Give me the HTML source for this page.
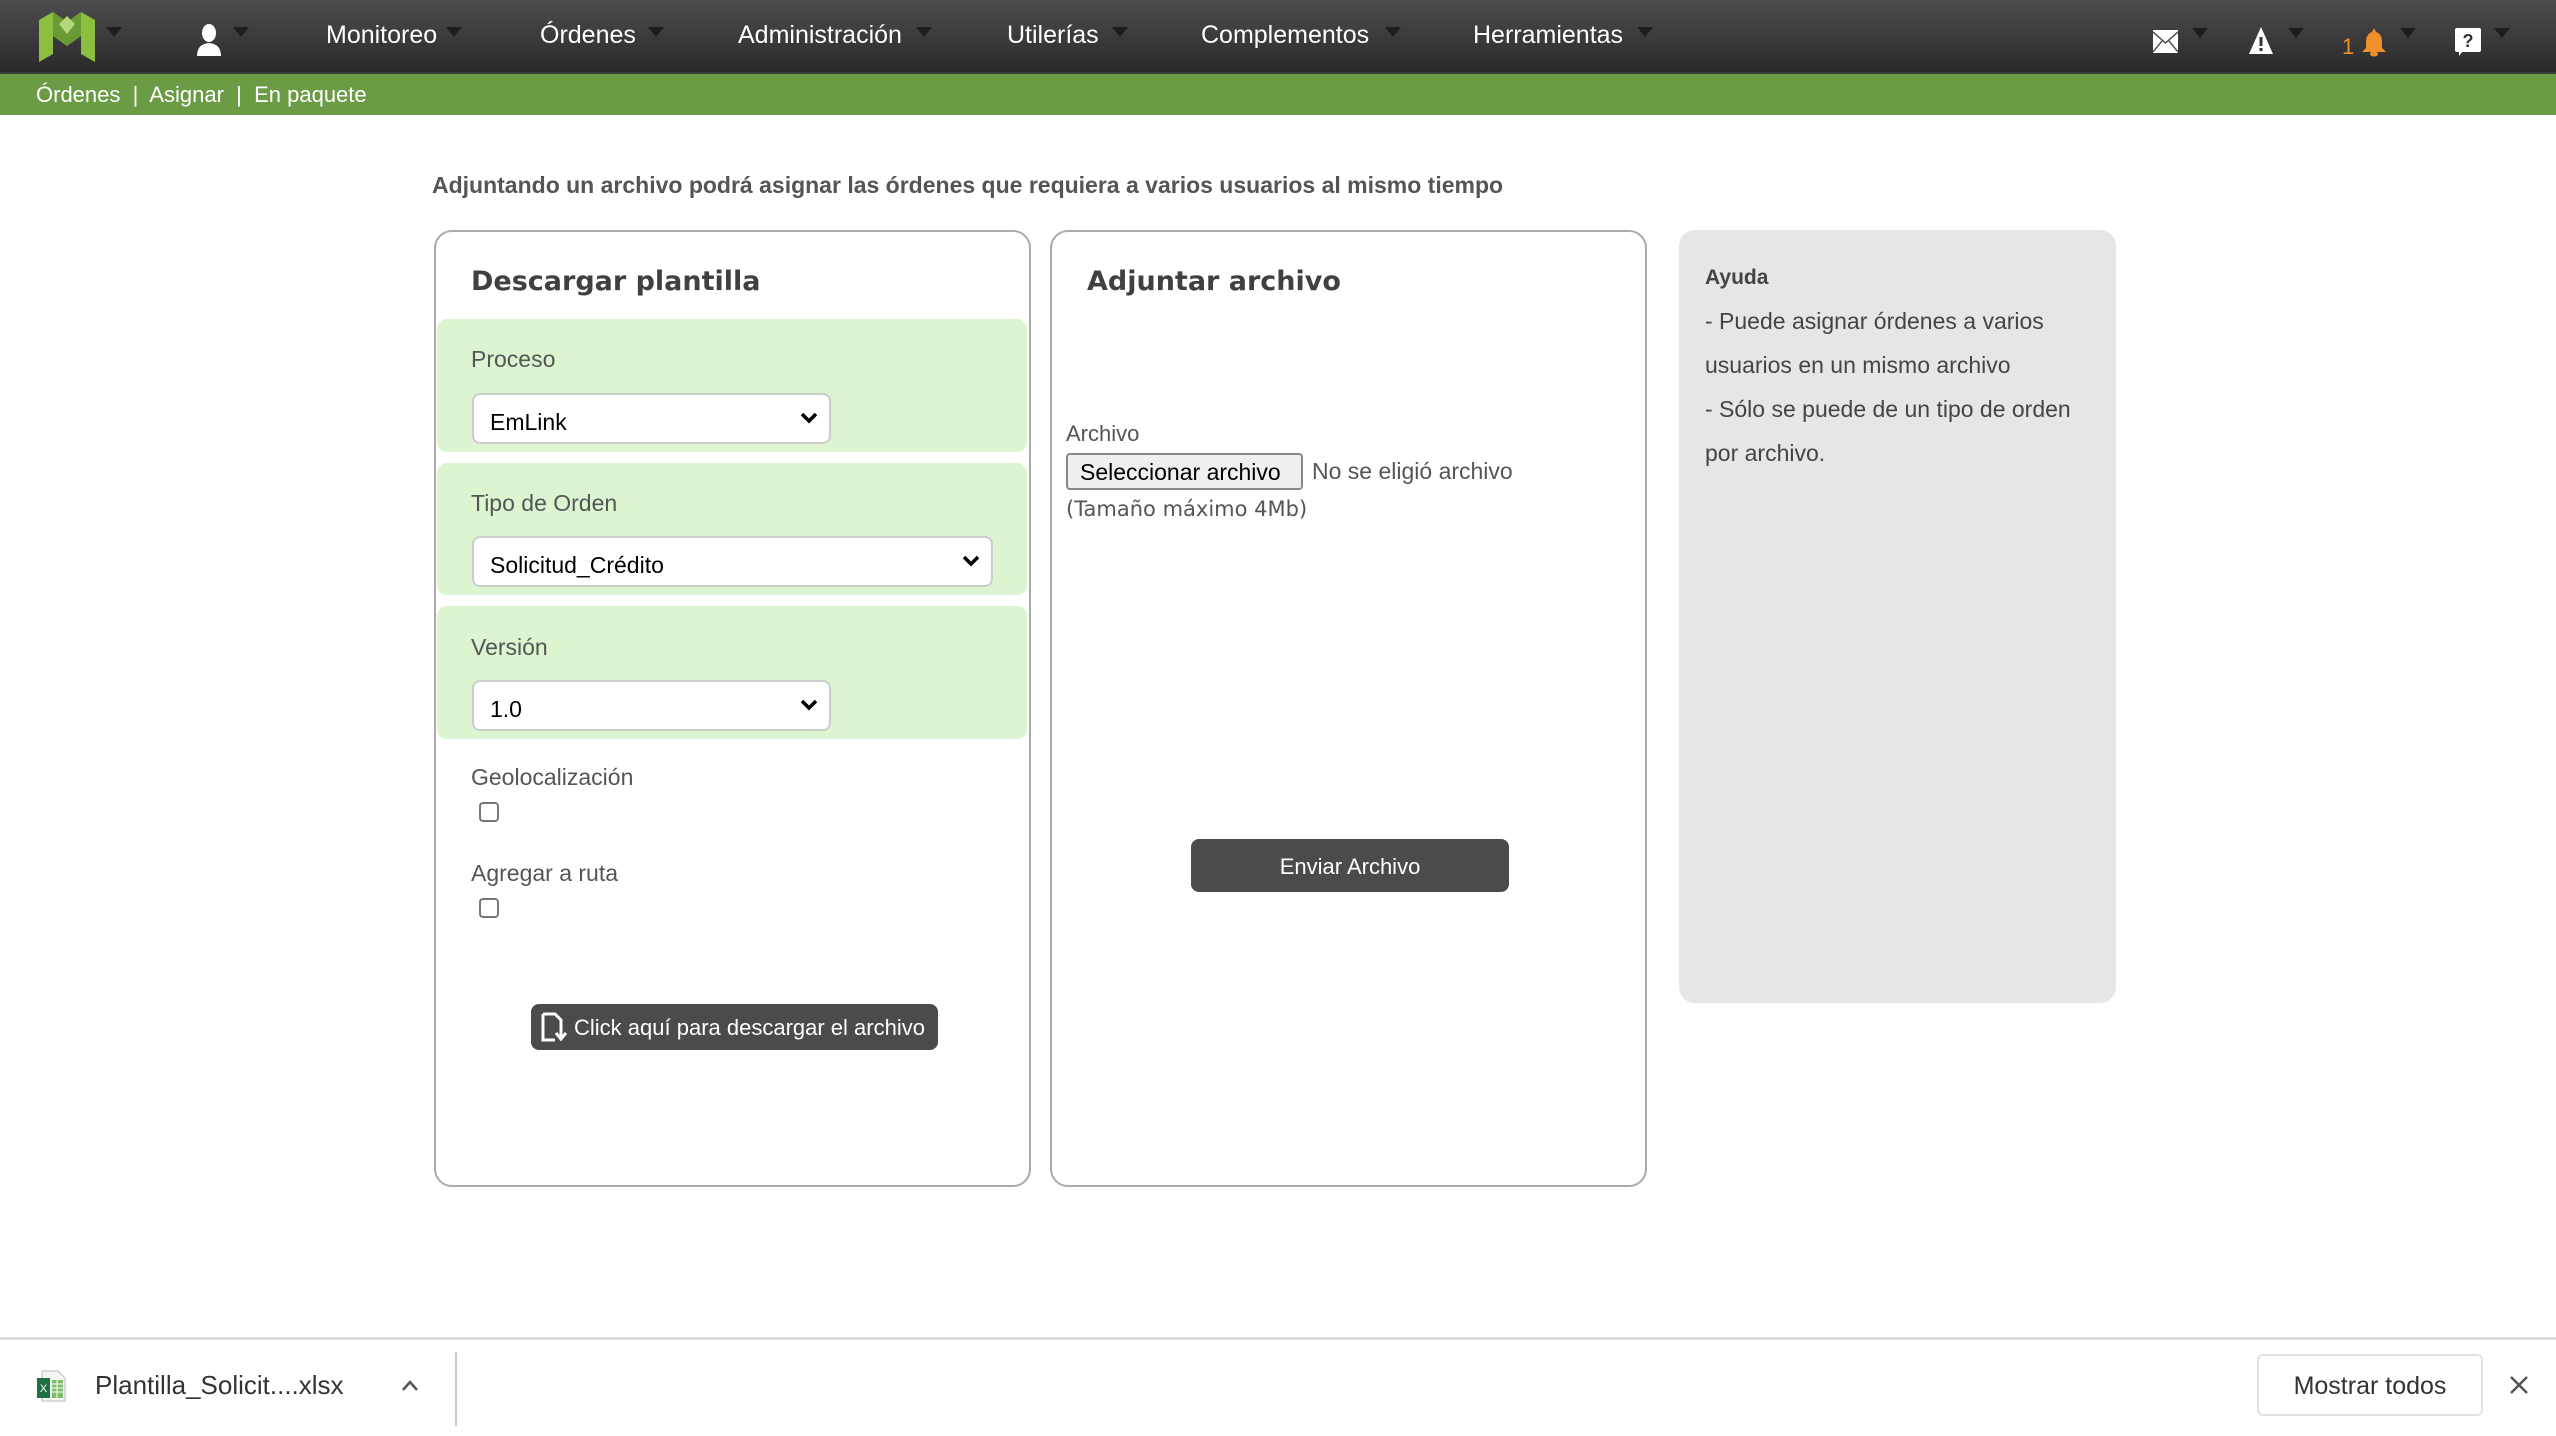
<!DOCTYPE html>
<html><head><meta charset="utf-8"><style>
*{box-sizing:border-box;margin:0;padding:0}
body{width:2556px;height:1436px;position:relative;background:#fff;font-family:"Liberation Sans",Arial,sans-serif;overflow:hidden}
.a{position:absolute;white-space:nowrap}
.nav{position:absolute;left:0;top:0;width:2556px;height:72px;background:linear-gradient(#4d4d4d,#2a2a2a)}
.ni{position:absolute;top:21px;color:#fff;font-size:25px}
.tri{position:absolute;width:0;height:0;border-left:8px solid transparent;border-right:8px solid transparent;border-top:10px solid #1e1e1e}
.crumb{position:absolute;left:0;top:72px;width:2556px;height:43px;background:#6c9b45;border-top:2px solid #3a3a3a}
.panel{position:absolute;top:230px;height:957px;border:2px solid #aaa;border-radius:18px;background:#fff}
.title{position:absolute;font-family:"DejaVu Sans",sans-serif;font-weight:bold;font-size:27px;color:#404040}
.sec{position:absolute;left:437px;width:590px;background:#dcf5d0;border-radius:10px}
.lbl{position:absolute;font-size:23px;color:#555}
.sel{position:absolute;height:51px;background:#fff;border:2px solid #ccc;border-radius:8px;font-size:23px;color:#000;padding:14px 0 0 16px}
.sel svg{position:absolute;right:10px;top:16px}
.cb{position:absolute;width:20px;height:20px;border:2px solid #777;border-radius:4px;background:#fff}
.btn{position:absolute;background:#4b4b4b;color:#fff;border-radius:8px;font-size:22px;text-align:center}
.help{position:absolute;left:1679px;top:230px;width:437px;height:773px;background:#e6e6e8;border-radius:16px}
.hl{position:absolute;left:1705px;font-size:23px;color:#444}
</style></head><body>
<div class="nav">
 <svg class="a" style="left:39px;top:12px" width="56" height="50" viewBox="0 0 56 50">
  <polygon points="0,8 14,0 28,10 42,0 56,8 56,50 42,42 42,24 28,34 14,24 14,42 0,50" fill="#8cbf3f"/>
  <polygon points="14,0 28,10 42,0 42,24 28,34 14,24" fill="#6a9a35"/>
  <polygon points="20,12 28,22 36,12 28,4" fill="#b5d77a"/>
 </svg>
 <div class="tri" style="left:106px;top:27px"></div>
 <svg class="a" style="left:195px;top:24px" width="28" height="32" viewBox="0 0 28 32"><ellipse cx="14" cy="9" rx="7" ry="9" fill="#fff"/><path d="M2 32 Q2 20 14 19 Q26 20 26 32Z" fill="#fff"/></svg>
 <div class="tri" style="left:233px;top:27px"></div>
 <div class="ni" style="left:326px">Monitoreo</div><div class="tri" style="left:446px;top:27px"></div>
 <div class="ni" style="left:540px">Órdenes</div><div class="tri" style="left:648px;top:27px"></div>
 <div class="ni" style="left:738px">Administración</div><div class="tri" style="left:916px;top:27px"></div>
 <div class="ni" style="left:1007px">Utilerías</div><div class="tri" style="left:1112px;top:27px"></div>
 <div class="ni" style="left:1201px">Complementos</div><div class="tri" style="left:1385px;top:27px"></div>
 <div class="ni" style="left:1473px">Herramientas</div><div class="tri" style="left:1637px;top:27px"></div>
 <svg class="a" style="left:2152px;top:29px" width="27" height="25" viewBox="0 0 27 25"><rect x="1" y="1" width="25" height="23" fill="#fff"/><path d="M1 3 L13.5 14 L26 3 M1 23 L10 12 M26 23 L17 12" stroke="#555" stroke-width="1.5" fill="none"/></svg>
 <div class="tri" style="left:2192px;top:28px"></div>
 <svg class="a" style="left:2249px;top:27px" width="24" height="27" viewBox="0 0 24 27"><polygon points="12,0 24,27 0,27" fill="#fff"/><rect x="10.5" y="10" width="3" height="9" fill="#333"/><rect x="10.5" y="21" width="3" height="3" fill="#333"/></svg>
 <div class="tri" style="left:2288px;top:28px"></div>
 <div class="a" style="left:2342px;top:34px;color:#f0902a;font-size:22px">1</div>
 <svg class="a" style="left:2362px;top:28px" width="24" height="30" viewBox="0 0 24 30"><path d="M12 0 L14 4 Q20 6 20 14 L20 20 L24 24 L0 24 L4 20 L4 14 Q4 6 10 4Z" fill="#f0902a"/><ellipse cx="12" cy="26" rx="4" ry="2.5" fill="#f0902a"/></svg>
 <div class="tri" style="left:2400px;top:28px"></div>
 <svg class="a" style="left:2455px;top:28px" width="26" height="28" viewBox="0 0 26 28"><rect x="0" y="0" width="26" height="24" rx="2" fill="#fff"/><polygon points="4,23 8,23 4,28" fill="#fff"/><text x="13" y="19" font-size="18" font-weight="bold" text-anchor="middle" fill="#333" font-family="Liberation Sans">?</text></svg>
 <div class="tri" style="left:2494px;top:28px"></div>
</div>
<div class="crumb"><div class="a" style="left:36px;top:8px;color:#fff;font-size:22px">Órdenes &nbsp;|&nbsp; Asignar &nbsp;|&nbsp; En paquete</div></div>

<div class="a" style="left:432px;top:172px;font-size:23px;font-weight:bold;color:#555">Adjuntando un archivo podrá asignar las órdenes que requiera a varios usuarios al mismo tiempo</div>

<div class="panel" style="left:434px;width:597px"></div>
<div class="title" style="left:471px;top:266px">Descargar plantilla</div>
<div class="sec" style="top:319px;height:133px"></div>
<div class="sec" style="top:463px;height:132px"></div>
<div class="sec" style="top:606px;height:133px"></div>
<div class="lbl" style="left:471px;top:346px">Proceso</div>
<div class="sel" style="left:472px;top:393px;width:359px">EmLink<svg width="20" height="14" viewBox="0 0 20 14"><path d="M3 3 L10 10 L17 3" stroke="#000" stroke-width="3.5" fill="none"/></svg></div>
<div class="lbl" style="left:471px;top:490px">Tipo de Orden</div>
<div class="sel" style="left:472px;top:536px;width:521px">Solicitud_Crédito<svg width="20" height="14" viewBox="0 0 20 14"><path d="M3 3 L10 10 L17 3" stroke="#000" stroke-width="3.5" fill="none"/></svg></div>
<div class="lbl" style="left:471px;top:634px">Versión</div>
<div class="sel" style="left:472px;top:680px;width:359px">1.0<svg width="20" height="14" viewBox="0 0 20 14"><path d="M3 3 L10 10 L17 3" stroke="#000" stroke-width="3.5" fill="none"/></svg></div>
<div class="lbl" style="left:471px;top:764px">Geolocalización</div>
<div class="cb" style="left:479px;top:802px"></div>
<div class="lbl" style="left:471px;top:860px">Agregar a ruta</div>
<div class="cb" style="left:479px;top:898px"></div>
<div class="btn" style="left:531px;top:1004px;width:407px;height:46px;font-size:22px;padding-top:11px;padding-left:30px">Click aquí para descargar el archivo</div>
<svg class="a" style="left:541px;top:1012px" width="28" height="30" viewBox="0 0 28 30"><path d="M2 2 H14 L20 8 V16 M2 2 V28 H14" stroke="#fff" stroke-width="3" fill="none"/><path d="M20 14 V26 M15 21 L20 27 L25 21" stroke="#fff" stroke-width="3" fill="none"/></svg>

<div class="panel" style="left:1050px;width:597px"></div>
<div class="title" style="left:1087px;top:266px">Adjuntar archivo</div>
<div class="lbl" style="left:1066px;top:421px;font-size:22px">Archivo</div>
<div class="a" style="left:1066px;top:453px;width:237px;height:37px;border:2px solid #888;border-radius:4px;background:#efefef;font-size:23px;padding:4px 0 0 12px;color:#000">Seleccionar archivo</div>
<div class="a" style="left:1312px;top:458px;font-size:23px;color:#555">No se eligió archivo</div>
<div class="a" style="left:1066px;top:497px;font-size:21px;color:#555;font-family:'DejaVu Sans',sans-serif">(Tamaño máximo 4Mb)</div>
<div class="btn" style="left:1191px;top:839px;width:318px;height:53px;padding-top:15px">Enviar Archivo</div>

<div class="help"></div>
<div class="hl" style="left:1705px;top:266px;font-size:21px;font-weight:bold">Ayuda</div>
<div class="hl" style="top:308px">- Puede asignar órdenes a varios</div>
<div class="hl" style="top:352px">usuarios en un mismo archivo</div>
<div class="hl" style="top:396px">- Sólo se puede de un tipo de orden</div>
<div class="hl" style="top:440px">por archivo.</div>

<div class="a" style="left:0;top:1337px;width:2556px;height:99px;border-top:3px solid #dcdcde;background:#fff"></div>
<svg class="a" style="left:36px;top:1370px" width="30" height="32" viewBox="0 0 30 32"><path d="M6 1 H22 L29 8 V31 H6Z" fill="#f4f4f4" stroke="#bbb"/><rect x="16" y="10" width="11" height="18" fill="#7cbf6a"/><path d="M16 14 H27 M16 18 H27 M16 22 H27 M21 10 V28" stroke="#fff" stroke-width="1"/><rect x="1" y="8" width="13" height="20" fill="#1d7044"/><text x="7.5" y="22" font-size="11" fill="#fff" text-anchor="middle" font-family="Liberation Sans">X</text></svg>
<div class="a" style="left:95px;top:1370px;font-size:26px;color:#333">Plantilla_Solicit....xlsx</div>
<svg class="a" style="left:400px;top:1378px" width="20" height="16" viewBox="0 0 20 16"><path d="M3 12 L10 4 L17 12" stroke="#555" stroke-width="2.5" fill="none"/></svg>
<div class="a" style="left:455px;top:1352px;width:2px;height:74px;background:#ccc"></div>
<div class="a" style="left:2257px;top:1354px;width:226px;height:62px;border:2px solid #e2e2e2;border-radius:6px;font-size:25px;color:#333;text-align:center;padding-top:16px">Mostrar todos</div>
<svg class="a" style="left:2508px;top:1374px" width="22" height="22" viewBox="0 0 22 22"><path d="M3 3 L19 19 M19 3 L3 19" stroke="#555" stroke-width="2.5"/></svg>
</body></html>
